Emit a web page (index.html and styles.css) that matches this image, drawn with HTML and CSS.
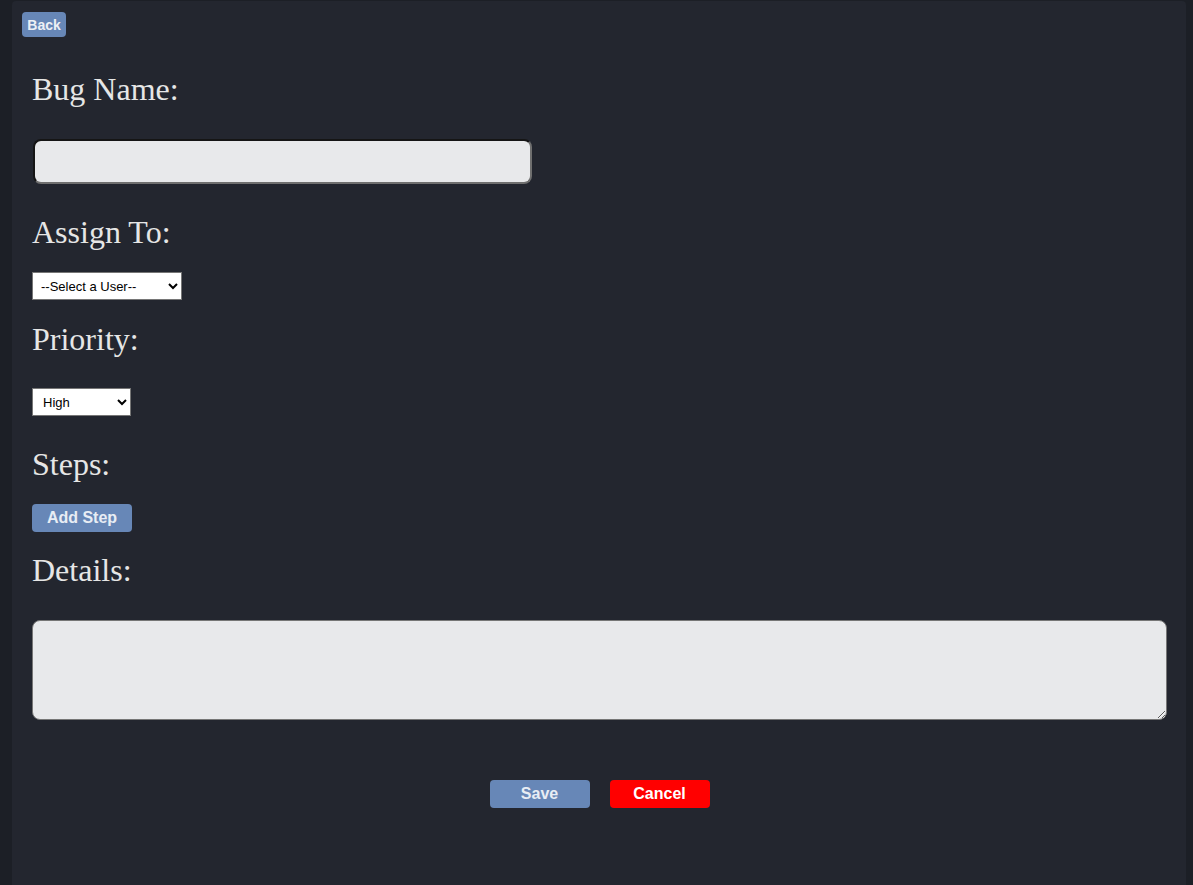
FILE: index.html
```html
<!DOCTYPE html>
<html lang="en">
<head>
<meta charset="utf-8">
<title>New Bug</title>
<link rel="stylesheet" href="styles.css">
</head>
<body>
<div class="panel">
  <button class="btn btn-back" type="button">Back</button>
  <form class="bug-form">
    <label class="field-label label-first" for="bugName">Bug Name:</label>
    <input class="text-input" id="bugName" type="text">
    <label class="field-label label-assign" for="assignTo">Assign To:</label>
    <select class="select select-user" id="assignTo">
      <option>--Select a User--</option>
    </select>
    <label class="field-label label-priority" for="priority">Priority:</label>
    <select class="select select-priority" id="priority">
      <option>High</option>
      <option>Medium</option>
      <option>Low</option>
    </select>
    <div class="field-label label-steps">Steps:</div>
    <button class="btn btn-wide btn-add" type="button">Add Step</button>
    <label class="field-label label-details" for="details">Details:</label>
    <textarea class="details" id="details"></textarea>
    <div class="actions">
      <button class="btn btn-wide btn-save" type="button">Save</button>
      <button class="btn btn-wide btn-cancel" type="button">Cancel</button>
    </div>
  </form>
</div>
</body>
</html>
```
FILE: styles.css
```css
* { box-sizing: border-box; }
html, body { margin: 0; padding: 0; }
body {
  background: #1c1f26;
  overflow: hidden;
  font-family: "Liberation Serif", "Times New Roman", serif;
}
.panel {
  margin: 1px 7px 0 12px;
  height: 884px;
  background: #23262f;
  border-radius: 4px 4px 0 0;
  padding: 11px 0 0 10px;
  display: flex;
  flex-direction: column;
  align-items: flex-start;
}
.bug-form {
  display: flex;
  flex-direction: column;
  align-items: flex-start;
  padding-left: 10px;
  width: 100%;
}
.field-label {
  display: block;
  font-size: 32px;
  line-height: 36px;
  height: 36px;
  color: #e6e6e6;
  white-space: nowrap;
}
.label-first { margin-top: 34px; }
.label-assign { margin-top: 30px; }
.label-priority { margin-top: 21px; }
.label-steps { margin-top: 30px; }
.label-details { margin-top: 20px; }

.btn {
  font-family: "Liberation Sans", Arial, sans-serif;
  font-weight: bold;
  border: none;
  border-radius: 4px;
  padding: 0;
  cursor: pointer;
}
.btn-back {
  width: 44px;
  height: 25px;
  font-size: 14px;
  background: #6787b7;
  color: #edf0f5;
}
.btn-wide {
  width: 100px;
  height: 28px;
  font-size: 16px;
}
.btn-add, .btn-save {
  background: #6787b7;
  color: #e8edf4;
}
.btn-add { margin-top: 22px; }
.btn-cancel {
  background: #ff0000;
  color: #ffffff;
}

.text-input {
  margin-top: 32px;
  margin-left: 1px;
  width: 499px;
  height: 45px;
  background: #e8e9eb;
  border-style: solid;
  border-width: 2px;
  border-color: #151515 #6f6f6f #6f6f6f #151515;
  border-radius: 8px;
  font-size: 16px;
  padding: 0 8px;
}
.select {
  height: 28px;
  background: #ffffff;
  color: #000;
  border: 1px solid #767676;
  border-radius: 0;
  font-family: "Liberation Sans", Arial, sans-serif;
  font-size: 13px;
  padding: 0 4px;
}
.select-user { margin-top: 22px; width: 150px; }
.select-priority { margin-top: 31px; width: 99px; padding-left: 6px; }

.details {
  margin-top: 32px;
  width: 1135px;
  height: 100px;
  background: #e8e9eb;
  border: 1px solid #767676;
  border-radius: 8px;
  font-size: 16px;
  padding: 6px;
  resize: both;
}
.actions {
  margin-top: 60px;
  width: 1135px;
  display: flex;
  justify-content: center;
  gap: 20px;
}
```
